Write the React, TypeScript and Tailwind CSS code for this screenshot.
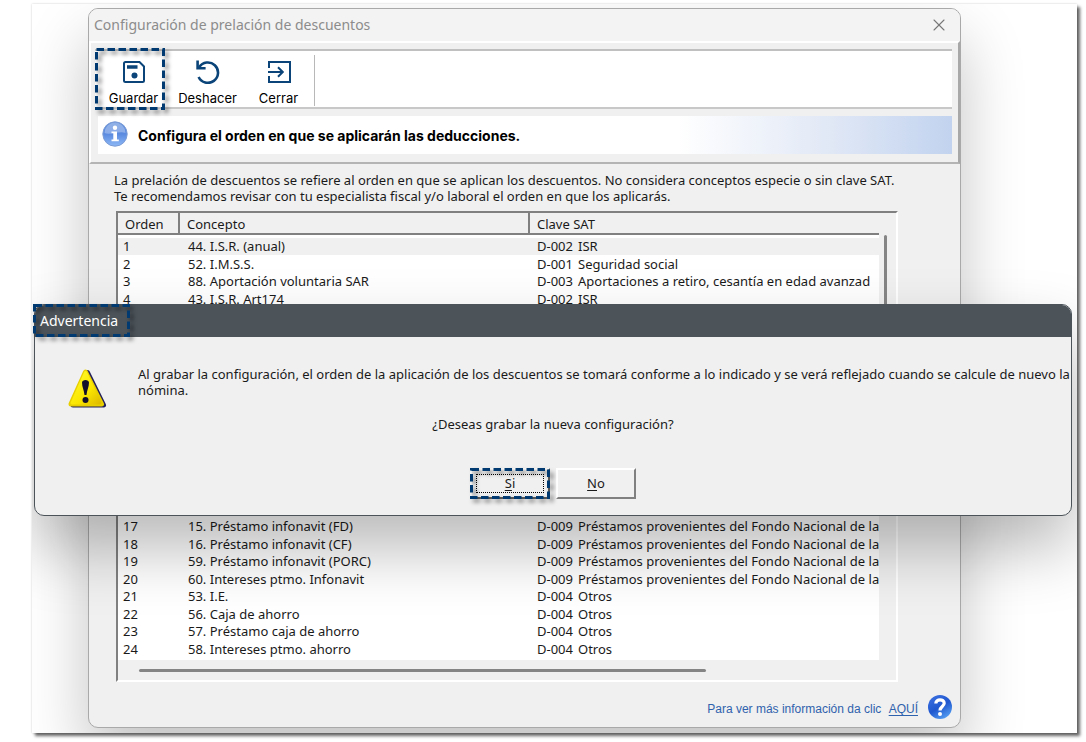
import { X } from "lucide-react";
import type { ReactNode } from "react";

interface Descuento {
	orden: number;
	concepto: string;
	clave: string;
	sat: string;
}

const INFONAVIT = "Préstamos provenientes del Fondo Nacional de la";

const primeros: Descuento[] = [
	{ orden: 1, concepto: "44. I.S.R. (anual)", clave: "D-002", sat: "ISR" },
	{ orden: 2, concepto: "52. I.M.S.S.", clave: "D-001", sat: "Seguridad social" },
	{
		orden: 3,
		concepto: "88. Aportación voluntaria SAR",
		clave: "D-003",
		sat: "Aportaciones a retiro, cesantía en edad avanzad",
	},
	{ orden: 4, concepto: "43. I.S.R. Art174", clave: "D-002", sat: "ISR" },
];

const ultimos: Descuento[] = [
	{ orden: 17, concepto: "15. Préstamo infonavit (FD)", clave: "D-009", sat: INFONAVIT },
	{ orden: 18, concepto: "16. Préstamo infonavit (CF)", clave: "D-009", sat: INFONAVIT },
	{ orden: 19, concepto: "59. Préstamo infonavit (PORC)", clave: "D-009", sat: INFONAVIT },
	{ orden: 20, concepto: "60. Intereses ptmo. Infonavit", clave: "D-009", sat: INFONAVIT },
	{ orden: 21, concepto: "53. I.E.", clave: "D-004", sat: "Otros" },
	{ orden: 22, concepto: "56. Caja de ahorro", clave: "D-004", sat: "Otros" },
	{ orden: 23, concepto: "57. Préstamo caja de ahorro", clave: "D-004", sat: "Otros" },
	{ orden: 24, concepto: "58. Intereses ptmo. ahorro", clave: "D-004", sat: "Otros" },
];

/* Dashed marker drawn around the control that the guide points at */
function Marker() {
	return (
		<svg
			aria-hidden="true"
			className="pointer-events-none absolute inset-0 h-full w-full overflow-visible drop-shadow-[3px_3px_2px_rgba(0,0,0,0.5)]"
		>
			<rect
				x="1.5"
				y="1.5"
				className="h-[calc(100%-3px)] w-[calc(100%-3px)]"
				fill="none"
				stroke="#003a70"
				strokeWidth="3"
				strokeDasharray="7.5 3.5"
			/>
		</svg>
	);
}

function SaveIcon() {
	return (
		<svg viewBox="0 0 24 24" className="h-6 w-6" fill="none" stroke="#0a4478" strokeWidth="2">
			<path d="M3.500 2H17.500L22 6.500V20.500a1.500 1.500 0 0 1-1.500 1.500H3.500a1.500 1.500 0 0 1-1.500-1.500V3.500A1.500 1.500 0 0 1 3.500 2z" />
			<path d="M5 7H15.5" strokeWidth="3.4" />
			<circle cx="12.5" cy="15.5" r="3" fill="#0a4478" stroke="none" />
		</svg>
	);
}

function UndoIcon() {
	return (
		<svg viewBox="0 0 24 24" className="h-6 w-6" fill="none" stroke="#0a4478" strokeWidth="2.6">
			<path d="M3.2 7.2A10.2 10.2 0 1 1 2.6 17" />
			<path d="M1.6 0.5V8.2H9.6" />
		</svg>
	);
}

function ExitIcon() {
	return (
		<svg viewBox="0 0 24 24" className="h-6 w-6" fill="none" stroke="#0a4478" strokeWidth="2">
			<path d="M2 8V2H23V22H2V16" />
			<path d="M1 12H15.5M11 7.2L15.8 12L11 16.8" />
		</svg>
	);
}

function InfoIcon() {
	return (
		<svg viewBox="0 0 26 26" className="h-[26px] w-[26px]" aria-hidden="true">
			<defs>
				<linearGradient id="info" x1="0" y1="0" x2="0" y2="1">
					<stop offset="0" stopColor="#5f8fdc" />
					<stop offset="0.5" stopColor="#5b8be0" />
					<stop offset="1" stopColor="#8db8f5" />
				</linearGradient>
			</defs>
			<circle cx="13" cy="13" r="12.2" fill="url(#info)" stroke="#7d9cd4" />
			<path d="M2.5 12A10.5 10.5 0 0 1 23.5 12C18 9.5 8 14.5 2.5 12z" fill="#fff" opacity="0.3" />
			<circle cx="13" cy="6.8" r="2.2" fill="#fff" />
			<path d="M9.5 10.5H15V18.5H16.8V20.3H9.5V18.5H11.3V12.3H9.5z" fill="#fff" />
		</svg>
	);
}

function HelpIcon() {
	return (
		<svg viewBox="0 0 24 24" className="h-6 w-6" aria-hidden="true">
			<defs>
				<linearGradient id="help" x1="0.2" y1="0" x2="0.8" y2="1">
					<stop offset="0" stopColor="#3b6fe0" />
					<stop offset="0.5" stopColor="#1f57cf" />
					<stop offset="1" stopColor="#5aa5f5" />
				</linearGradient>
			</defs>
			<circle cx="12" cy="12" r="12" fill="url(#help)" />
			<path
				d="M7.8 8.6C7.8 3.600 16.200 3.600 16.200 8.300C16.200 11.500 12 11.500 12 15.400"
				fill="none"
				stroke="#fff"
				strokeWidth="3.2"
			/>
			<circle cx="12" cy="19" r="2" fill="#fff" />
		</svg>
	);
}

function WarningIcon() {
	return (
		<svg viewBox="0 0 40 40" className="mt-0.5 h-10 w-10 shrink-0" aria-hidden="true">
			<defs>
				<linearGradient id="warn" x1="0" y1="0" x2="1" y2="1">
					<stop offset="0" stopColor="#fffb30" />
					<stop offset="0.6" stopColor="#fbe600" />
					<stop offset="1" stopColor="#e0bc00" />
				</linearGradient>
			</defs>
			<path d="M20.500 4.500L36.500 37H6z" fill="#23205c" stroke="#23205c" strokeWidth="5" strokeLinejoin="round" />
			<path d="M18.500 4L34.500 36H4z" fill="#e8cf00" stroke="#e8cf00" strokeWidth="5" strokeLinejoin="round" />
			<path d="M18.500 4.500L33 35H5z" fill="url(#warn)" stroke="url(#warn)" strokeWidth="3" strokeLinejoin="round" />
			<path d="M15 14.500C15 11 22 11 22 14.500C22 19 20 22 19.500 27H17.500C17 22 15 19 15 14.500z" fill="#14102c" />
			<circle cx="18.500" cy="32" r="3" fill="#14102c" />
		</svg>
	);
}

function ToolButton({ label, icon }: { label: string; icon: ReactNode }) {
	return (
		<button type="button" className="flex w-[71px] flex-col items-center gap-1.5 pt-3">
			{icon}
			<span>{label}</span>
		</button>
	);
}

function Fila({ fila, activa = false }: { fila: Descuento; activa?: boolean }) {
	return (
		<tr className={activa ? "h-[17px] bg-[#f0f0f0]" : "odd:h-[17px] even:h-[18px]"}>
			<td className="p-0 pl-[5px]">{fila.orden}</td>
			<td className="p-0 pl-2">{fila.concepto}</td>
			<td className="p-0 pl-[7px]">
				<span className="inline-block w-[41px]">{fila.clave}</span>
				{fila.sat}
			</td>
		</tr>
	);
}

function TablaDescuentos() {
	return (
		<div className="mt-[7px] mr-[62px] ml-[27px] border-2 border-t-[#808080] border-r-white border-b-white border-l-[#808080]">
			<div className="flex">
				<div className="h-[447px] min-w-0 flex-1 overflow-hidden bg-white">
					<table className="w-full table-fixed border-collapse text-left leading-[17px] whitespace-nowrap">
						<thead>
							<tr className="group">
								{["Orden", "Concepto", "Clave SAT"].map((titulo) => (
									<th
										key={titulo}
										scope="col"
										className="p-0 pb-[3px] font-normal first:w-[62px] nth-2:w-[350px] last:*:border-r-0"
									>
										<div className="h-[22px] border-r-2 border-b-2 border-[#808080] bg-[#f0f0f0] pt-[3px] pl-[7px]">
											{titulo}
										</div>
									</th>
								))}
							</tr>
						</thead>
						<tbody>
							{primeros.map((fila) => (
								<Fila key={fila.orden} fila={fila} activa={fila.orden === 1} />
							))}
							{/* Rows that stay behind the warning dialog */}
							<tr className="h-[105px]" />
							<tr className="h-[105px]" />
							{ultimos.map((fila) => (
								<Fila key={fila.orden} fila={fila} />
							))}
						</tbody>
					</table>
				</div>
				<div className="w-[17px] pt-[22px] pl-[5px]">
					<div className="h-[200px] w-[3px] rounded-full bg-[#858585]" />
				</div>
			</div>
			<div className="h-5 pt-[9px] pr-[190px] pl-[21px]">
				<div className="h-[3px] rounded-full bg-[#858585]" />
			</div>
		</div>
	);
}

function Advertencia() {
	return (
		<div
			role="dialog"
			aria-labelledby="advertencia"
			className="absolute top-[300px] right-[5px] left-0.5 rounded-[10px] border border-[#4c545a] bg-[#f0f0f0] shadow-[0_32px_64px_rgba(0,0,0,0.28)]"
		>
			<div className="flex h-8 rounded-t-[9px] bg-[#4c545a]">
				<h2
					id="advertencia"
					className="relative -mt-px -ml-0.5 flex h-[33px] w-[97px] items-center pl-[7px] text-sm text-white"
				>
					Advertencia
					<Marker />
				</h2>
			</div>
			<div className="flex gap-[31px] pt-[29px] pl-8">
				<WarningIcon />
				<p className="leading-4">
					Al grabar la configuración, el orden de la aplicación de los descuentos se tomará conforme a lo
					indicado y se verá reflejado cuando se calcule de nuevo la nómina.
				</p>
			</div>
			<p className="mt-2 text-center leading-4">¿Deseas grabar la nueva configuración?</p>
			<div className="mt-9 flex justify-center gap-1.5 pb-4">
				<button
					type="button"
					className="relative h-[31px] w-20 border-2 border-t-white border-r-[#606060] border-b-[#606060] border-l-white p-1"
				>
					<span className="flex h-full items-center justify-center border border-dotted border-black">
						<span>
							<span className="underline underline-offset-2">S</span>i
						</span>
					</span>
					<span className="absolute -inset-0.5">
						<Marker />
					</span>
				</button>
				<button
					type="button"
					className="h-[31px] w-20 border-2 border-t-white border-r-[#808080] border-b-[#808080] border-l-white"
				>
					<span className="underline underline-offset-2">N</span>o
				</button>
			</div>
		</div>
	);
}

export default function App() {
	return (
		<div className="bg-white pt-1 pr-[9px] pb-2 pl-8 font-['Noto_Sans',sans-serif] text-[13px] text-[#1a1a1a]">
			<main className="relative overflow-hidden bg-white pt-1 pr-[116px] pb-[5px] pl-14 shadow-[3px_3px_3px_rgba(0,0,0,0.6),0_0_2px_rgba(0,0,0,0.2)]">
				<section className="overflow-hidden rounded-[10px] border border-[#a9a9a9] bg-[#f0f0f0] shadow-[0_32px_64px_rgba(0,0,0,0.24)]">
					<div className="flex h-8 items-center justify-between bg-[#f3f3f3] pr-[11px] pl-[5px]">
						<h1 className="text-sm text-[#8c8c8c]">Configuración de prelación de descuentos</h1>
						<button type="button" aria-label="Cerrar ventana" className="text-[#777]">
							<X className="h-5 w-5" strokeWidth={1.3} />
						</button>
					</div>

					<div className="border-2 border-t-white border-r-[#a8a8a8] border-b-[#b4b4b4] border-l-white pt-1.5 pr-1.5 pb-2 pl-1">
						<div className="flex h-[60px] border-y-2 border-t-[#c0c0c0] border-b-[#c8c8c8] bg-white font-['Inter',sans-serif] leading-4 text-black">
							<div className="relative -mt-[3px] h-[62px] w-[70px] pl-[3px]">
								<ToolButton label="Guardar" icon={<SaveIcon />} />
								<Marker />
							</div>
							<div className="-mt-[3px] flex h-[62px] pl-[7px]">
								<ToolButton label="Deshacer" icon={<UndoIcon />} />
								<ToolButton label="Cerrar" icon={<ExitIcon />} />
							</div>
							<div className="mt-1 mb-px border-l border-[#b8b8b8]" />
						</div>
						<div className="mt-[7px] ml-[3px] flex h-[38px] items-center gap-2.5 bg-linear-to-r from-white from-68% via-[#e2e9f6] via-85% to-[#c2d3ef] pb-0.5 pl-1">
							<InfoIcon />
							<p className="pt-1 text-sm font-bold text-black font-['Inter',sans-serif]">
								Configura el orden en que se aplicarán las deducciones.
							</p>
						</div>
					</div>

					<p className="mt-2 mr-10 ml-[25px] leading-4">
						La prelación de descuentos se refiere al orden en que se aplican los descuentos. No considera
						conceptos especie o sin clave SAT.
						<br />
						Te recomendamos revisar con tu especialista fiscal y/o laboral el orden en que los aplicarás.
					</p>

					<TablaDescuentos />

					<div className="flex items-center justify-end gap-2.5 pt-[13px] pr-2 pb-2 font-['Liberation_Sans',sans-serif] text-xs text-[#2f62ad]">
						<p className="pt-1">
							Para ver más información da clic{" "}
							<a href="#ayuda" className="ml-1 underline underline-offset-2">
								AQUÍ
							</a>
						</p>
						<button type="button" aria-label="Ayuda">
							<HelpIcon />
						</button>
					</div>
				</section>
				<Advertencia />
			</main>
		</div>
	);
}
